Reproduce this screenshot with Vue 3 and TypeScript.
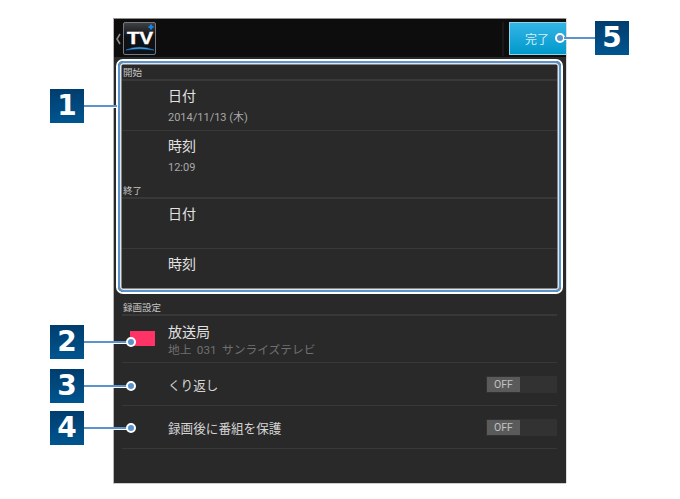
<script setup lang="ts">
interface Callout {
  id: number
  top: number
  lineWidth: number
}

const callouts: Callout[] = [
  { id: 1, top: 89, lineWidth: 33 },
  { id: 2, top: 325, lineWidth: 47 },
  { id: 3, top: 369, lineWidth: 47 },
  { id: 4, top: 411, lineWidth: 47 },
];
</script>

<template>
  <div class="page">
    <div class="phone">
      <header class="topbar">
        <svg class="back" width="9" height="14" viewBox="0 0 9 14">
          <path d="M6 2 L3 7 L6 12" fill="none" stroke="#8a8a8a" stroke-width="1.6" />
        </svg>
        <svg class="logo" width="33" height="33" viewBox="0 0 33 33">
          <defs>
            <linearGradient id="logoBg" x1="0" y1="0" x2="0" y2="1">
              <stop offset="0" stop-color="#3f4246" />
              <stop offset="0.45" stop-color="#101114" />
              <stop offset="1" stop-color="#0c1219" />
            </linearGradient>
          </defs>
          <rect x="0.5" y="0.5" width="32" height="32" rx="1.5" fill="url(#logoBg)" stroke="#77797c" />
          <text x="4" y="22" textLength="26" lengthAdjust="spacingAndGlyphs" class="logo-text">TV</text>
          <path d="M3 28 Q16 22.5 31 28 Q16 25.5 3 28Z" fill="#4aa8ee" stroke="#2a86d6" stroke-width="0.5" />
          <path d="M25.5 5h5M28 2.5v5" stroke="#1582e6" stroke-width="2.2" />
        </svg>
        <span class="sep"></span>
        <button class="done">完了</button>
      </header>

      <main class="content">
        <h2 class="section first">開始</h2>
        <div class="row tall line"><b>日付</b><small>2014/11/13 (木)</small></div>
        <div class="row tall"><b>時刻</b><small>12:09</small></div>
        <h2 class="section end">終了</h2>
        <div class="row tall line"><b>日付</b></div>
        <div class="row tall short"><b>時刻</b></div>

        <h2 class="section rec">録画設定</h2>
        <div class="row station line">
          <i class="swatch"></i>
          <b>放送局</b>
          <small>地上&nbsp; 031&nbsp; サンライズテレビ</small>
        </div>
        <div class="row toggle-row line">
          <span>くり返し</span>
          <div class="track"><div class="thumb">OFF</div></div>
        </div>
        <div class="row toggle-row line">
          <span>録画後に番組を保護</span>
          <div class="track"><div class="thumb">OFF</div></div>
        </div>
      </main>
    </div>

    <div class="frame"></div>

    <div v-for="c in callouts" :key="c.id" class="callout" :style="{ top: c.top + 'px' }">
      <span class="badge">{{ c.id }}</span>
      <span class="lead" :style="{ width: c.lineWidth + 'px' }"></span>
      <span v-if="c.id !== 1" class="dot"></span>
    </div>

    <div class="callout reverse">
      <span class="dot"></span>
      <span class="lead" :style="{ width: '31px' }"></span>
      <span class="badge">5</span>
    </div>
  </div>
</template>

<style>
html, body {
  background: #fff;
}
</style>

<style scoped>
.page {
  position: relative;
  width: 680px;
  height: 499px;
  overflow: hidden;
  padding-top: 18px;
  box-sizing: border-box;
  font-family: "Noto Sans CJK JP", "Noto Sans", sans-serif;
}

.phone {
  width: 453px;
  height: 465px;
  margin-left: 113px;
  box-sizing: border-box;
  display: flex;
  flex-direction: column;
  background: #292929;
  border-top: 1px solid #8f8f8f;
  border-left: 1px solid #b5b5b5;
  box-shadow: 0 1px 0 #ccc, 1px 0 0 #ddd;
}

.topbar {
  height: 38px;
  flex: none;
  display: flex;
  align-items: flex-start;
  background: #0d0d0d;
  padding-top: 3px;
  box-sizing: border-box;
}

.back {
  flex: none;
  margin-top: 10px;
}

.logo {
  flex: none;
}

.logo-text {
  font-family: "Liberation Sans", sans-serif;
  font-weight: 700;
  font-size: 16px;
  fill: #fff;
  stroke: #fff;
  stroke-width: 0.4px;
}

.sep {
  width: 2px;
  height: 34px;
  margin-left: auto;
  margin-right: 5px;
  background: #191919;
}

.done {
  width: 57px;
  height: 33px;
  box-sizing: border-box;
  padding: 0 2px 0 0;
  border: 1px solid #8fd3ea;
  border-right: 0;
  background: linear-gradient(#33b5e5, #0099cc);
  color: #d5eef7;
  font-family: inherit;
  font-size: 12px;
}

.content {
  flex: 1;
  padding: 0 9px 0 8px;
  color: #ddd;
}

.section {
  margin: 0;
  padding-left: 1px;
  font-size: 9.5px;
  font-weight: 400;
  line-height: 13px;
  color: #c4c4c4;
  border-bottom: 2px solid #383838;
  box-sizing: border-box;
}

.section.first {
  height: 24px;
  padding-top: 9px;
}

.section.end {
  height: 18px;
  padding-top: 3px;
}

.section.rec {
  height: 24px;
  padding-top: 9px;
}

.row {
  box-sizing: border-box;
  position: relative;
  padding-left: 46px;
}

.row.line {
  border-bottom: 1px solid #383838;
}

.row b {
  display: block;
  font-weight: 400;
  font-size: 14px;
  line-height: 20px;
  color: #e2e2e2;
}

.row small {
  display: block;
  font-family: Roboto, "Noto Sans CJK JP", sans-serif;
  font-size: 11px;
  line-height: 14px;
  color: #a8a8a8;
}

.row.tall {
  height: 50px;
  padding-top: 4px;
}

.row.tall small {
  margin-top: 6px;
}

.row.short {
  height: 43px;
}

.station {
  height: 47px;
  padding-top: 6px;
}

.station b {
  line-height: 19px;
}

.station small {
  font-size: 11.75px;
  line-height: 18px;
  word-spacing: -0.25px;
  color: #707070;
}

.swatch {
  position: absolute;
  left: 8px;
  top: 15px;
  width: 25px;
  height: 15px;
  background: #ff3366;
}

.toggle-row {
  display: flex;
  align-items: center;
  justify-content: space-between;
  height: 43px;
  font-size: 12.6px;
  color: #d4d4d4;
}

.track {
  width: 71px;
  height: 17px;
  box-sizing: border-box;
  padding: 1px;
  background: #323232;
}

.thumb {
  width: 33px;
  height: 15px;
  background: #5a5a5a;
  color: #c2c2c2;
  font-family: Roboto, sans-serif;
  font-size: 10.5px;
  line-height: 15px;
  text-align: center;
}

.frame {
  position: absolute;
  left: 118px;
  top: 61px;
  width: 443px;
  height: 231px;
  box-sizing: border-box;
  border: 2px solid #5b93cc;
  border-radius: 5px;
  box-shadow: 0 0 0 2px #fff, inset 0 0 0 1.5px #e4e4e4;
}

.callout {
  position: absolute;
  left: 50px;
  display: flex;
  align-items: center;
}

.callout.reverse {
  left: 555px;
  top: 21px;
}

.badge {
  width: 34px;
  height: 34px;
  flex: none;
  background: linear-gradient(#003d6e, #00558f);
  color: #fff;
  font-family: "DejaVu Sans", sans-serif;
  font-weight: 700;
  font-size: 28px;
  line-height: 34px;
  text-align: center;
}

.lead {
  height: 2px;
  flex: none;
  background: #5b93cc;
  box-shadow: 0 1px 0 #fff;
}

.dot {
  width: 10px;
  height: 10px;
  flex: none;
  box-sizing: border-box;
  margin-left: -5px;
  border: 2px solid #fff;
  border-radius: 50%;
  background: #5b93cc;
}

.reverse .dot {
  margin-left: 0;
  margin-right: -1px;
}
</style>
